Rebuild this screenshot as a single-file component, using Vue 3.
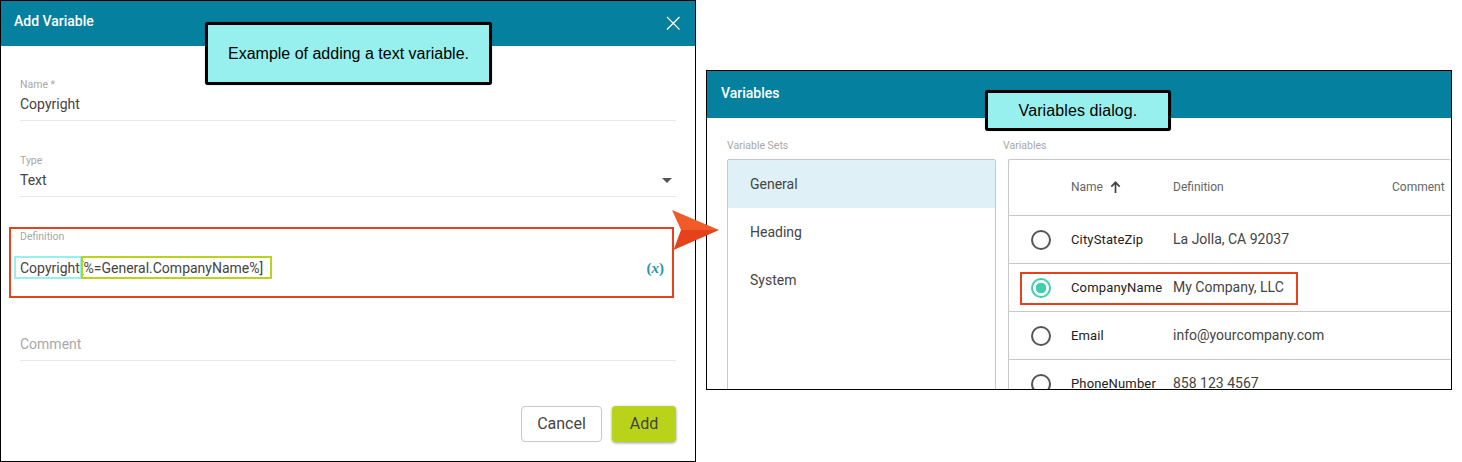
<script setup>
const sets = [
  { name: 'General', active: true },
  { name: 'Heading', active: false },
  { name: 'System', active: false },
]
const rows = [
  { name: 'CityStateZip', def: 'La Jolla, CA 92037', on: false },
  { name: 'CompanyName', def: 'My Company, LLC', on: true },
  { name: 'Email', def: 'info@yourcompany.com', on: false },
  { name: 'PhoneNumber', def: '858 123 4567', on: false },
]
</script>

<template>
  <div class="canvas">
    <section class="dialog add">
      <header class="head">
        <span class="title">Add Variable</span>
        <svg class="close" width="14" height="14" viewBox="0 0 14 14" fill="none" stroke="#fff" stroke-width="1.2">
          <path d="M1 1 L13.5 13.5 M13.5 1 L1 13.5" />
        </svg>
      </header>
      <div class="form">
        <div class="field name-field">
          <div class="label">Name *</div>
          <div class="value">Copyright</div>
        </div>
        <div class="field type-field">
          <div class="label">Type</div>
          <div class="value select">
            <span>Text</span>
            <svg width="10" height="5" viewBox="0 0 10 5"><path d="M0 0 H10 L5 5 Z" fill="#555" /></svg>
          </div>
        </div>
        <div class="field def-field">
          <div class="label">Definition</div>
          <div class="value def">
            <span>Copyright[%=General.CompanyName%]</span>
            <span class="fx">(<i>x</i>)</span>
          </div>
        </div>
        <div class="field comment-field">
          <div class="value muted">Comment</div>
        </div>
        <div class="actions">
          <button class="btn cancel">Cancel</button>
          <button class="btn add-btn">Add</button>
        </div>
      </div>
      <div class="mark red def-box"></div>
      <div class="mark cyan"></div>
      <div class="mark green"></div>
    </section>

    <section class="dialog vars">
      <header class="head">
        <span class="title">Variables</span>
      </header>
      <div class="columns">
        <div class="col-sets">
          <div class="label cap">Variable Sets</div>
          <ul class="panel sets">
            <li v-for="s in sets" :key="s.name" class="set" :class="{ active: s.active }">{{ s.name }}</li>
          </ul>
        </div>
        <div class="col-table">
          <div class="label cap">Variables</div>
          <div class="panel table">
            <div class="row th">
              <span></span>
              <span class="h-name">Name
                <svg width="11" height="12" viewBox="0 0 11 12" fill="none" stroke="#444" stroke-width="1.7">
                  <path d="M5.5 12 V1.5 M1.3 5.6 L5.5 1.3 L9.7 5.6" />
                </svg>
              </span>
              <span>Definition</span>
              <span class="h-comment">Comment</span>
            </div>
            <div v-for="r in rows" :key="r.name" class="row td">
              <span class="radio" :class="{ on: r.on }"></span>
              <span class="r-name">{{ r.name }}</span>
              <span class="r-def">{{ r.def }}</span>
              <span></span>
            </div>
          </div>
        </div>
      </div>
      <div class="mark red row-box"></div>
    </section>

    <div class="callout c1">Example of adding a text variable.</div>
    <div class="callout c2">Variables dialog.</div>

    <svg class="arrow" width="48" height="41" viewBox="0 0 48 41">
      <path d="M0 0 L47 20 L9 20 Z" fill="#f15a29" />
      <path d="M9 20 L47 20 L1.5 40 Z" fill="#e5411a" />
    </svg>
  </div>
</template>

<style>
html, body { margin: 0; background: #fff; }
</style>

<style scoped>
.canvas {
  position: relative;
  width: 1462px;
  height: 462px;
  overflow: hidden;
  font-family: Roboto, "Liberation Sans", sans-serif;
  color: #444;
}
.dialog {
  position: absolute;
  box-sizing: border-box;
  border: 1px solid #000;
  background: #fff;
  overflow: hidden;
}
.add { left: 0; top: 0; width: 696px; height: 462px; }
.vars { left: 706px; top: 70px; width: 746px; height: 320px; }
.head {
  display: flex;
  align-items: center;
  justify-content: space-between;
  box-sizing: border-box;
  background: #05809f;
  color: #fff;
  padding: 0 15px 0 13px;
}
.add .head { height: 45px; padding-bottom: 6px; }
.vars .head { height: 47px; padding-left: 14px; padding-bottom: 4px; }
.title { font-size: 14px; font-weight: 500; }
.close { margin-top: 4px; }
.form { padding: 33px 19px 0; }
.field { border-bottom: 1px solid #e8e8e8; box-sizing: border-box; }
.label { font-size: 10.5px; line-height: 12px; color: #a8a8a8; }
.value { font-size: 14px; line-height: 20px; color: #444; }
.name-field, .type-field { height: 42px; margin-bottom: 34px; }
.name-field .value, .type-field .value { margin-top: 3px; }
.select { display: flex; align-items: center; justify-content: space-between; padding-right: 4px; }
.def-field { height: 66px; margin-bottom: 37px; }
.def { margin-top: 15px; display: flex; justify-content: space-between; align-items: center; padding-right: 12px; }
.fx {
  font-family: "Liberation Serif", serif;
  font-weight: 700;
  font-size: 15px;
  color: #2b93ad;
}
.comment-field { height: 27px; }
.muted { color: #a8a8a8; }
.actions { display: flex; justify-content: flex-end; gap: 10px; margin-top: 45px; }
.btn {
  height: 36px;
  box-sizing: border-box;
  border-radius: 4px;
  font-family: inherit;
  font-size: 16px;
  color: #444;
  padding: 0 0 2px;
}
.cancel { width: 81px; background: #fff; border: 1px solid #c8c8c8; }
.add-btn { width: 64px; background: #b9d31a; border: 0; box-shadow: 0 1px 3px rgba(0, 0, 0, 0.4); }
.mark { position: absolute; box-sizing: border-box; border: 2px solid; pointer-events: none; }
.red { border-color: #e5411a; }
.def-box { left: 8px; top: 226px; width: 665px; height: 71px; }
.cyan { left: 13px; top: 255px; width: 68px; height: 23px; border-color: #97f0ee; }
.green { left: 80px; top: 255px; width: 191px; height: 23px; border-color: #b9d31a; }
.row-box { left: 313px; top: 201px; width: 278px; height: 33px; }
.columns { display: flex; padding: 22px 0 0 20px; }
.col-sets { width: 269px; flex: none; }
.col-table { flex: 1; margin-left: 7px; min-width: 0; }
.cap { height: 12px; margin-bottom: 7px; }
.panel {
  box-sizing: border-box;
  margin: 0;
  padding: 0;
  list-style: none;
  border: 1px solid #c8c8c8;
  border-radius: 2px 2px 0 0;
  height: 300px;
}
.set { height: 48px; line-height: 48px; padding-left: 22px; font-size: 14px; color: #444; }
.set.active { background: #dff1f6; }
.table { margin-left: 5px; border-right: 0; }
.row {
  display: grid;
  grid-template-columns: 62px 102px 219px 1fr;
  align-items: center;
  box-sizing: border-box;
  border-bottom: 1px solid #c8c8c8;
  height: 48px;
}
.th { height: 56px; padding-bottom: 2px; font-size: 12px; color: #666; }
.h-name { display: flex; align-items: center; gap: 7px; }
.h-comment { white-space: nowrap; }
.td { font-size: 14px; color: #444; }
.r-def { padding-bottom: 2px; }
.radio {
  box-sizing: border-box;
  display: block;
  width: 20px;
  height: 20px;
  margin-left: 22px;
  border: 2px solid #555;
  border-radius: 50%;
}
.radio.on {
  border-color: #41ceab;
  background: radial-gradient(circle, #41ceab 0 5px, transparent 5.6px);
}
.r-name { font-size: 13px; letter-spacing: 0.15px; color: #222; white-space: nowrap; }
.callout {
  position: absolute;
  box-sizing: border-box;
  display: flex;
  align-items: center;
  justify-content: center;
  background: #97f0ee;
  border: 3px solid #000;
  border-radius: 3px;
  box-shadow: 0 0 1px rgba(0, 0, 0, 0.5);
  color: #000;
  font-family: "Liberation Sans", Arial, sans-serif;
  font-size: 16px;
}
.c1 { left: 205px; top: 22px; width: 287px; height: 63px; }
.c2 { left: 985px; top: 90px; width: 186px; height: 41px; letter-spacing: 0.1px; }
.arrow { position: absolute; left: 672px; top: 210px; }
</style>
